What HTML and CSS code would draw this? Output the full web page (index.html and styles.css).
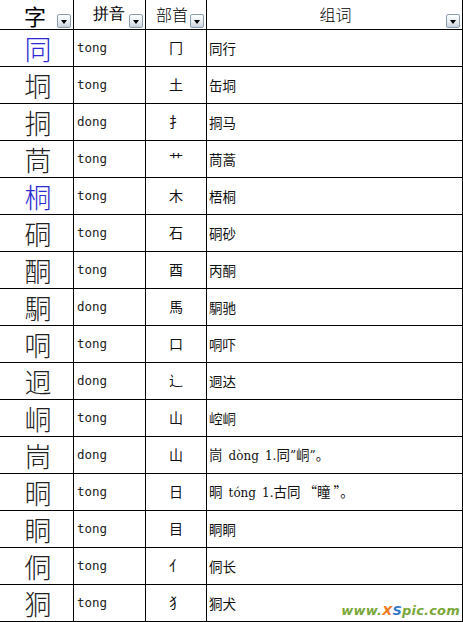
FILE: index.html
```html
<!DOCTYPE html>
<html lang="zh">
<head>
<meta charset="utf-8">
<link rel="stylesheet" href="styles.css">
</head>
<body>
<div class="sheet">
  <div class="row head">
    <div class="cell c1"><span class="h-big">字</span><span class="dd"></span></div>
    <div class="cell c2"><span class="h-txt">拼音</span><span class="dd"></span></div>
    <div class="cell c3"><span class="h-txt">部首</span><span class="dd"></span></div>
    <div class="cell c4"><span class="h-txt">组词</span><span class="dd"></span></div>
  </div>
  <div class="row"><div class="cell c1 blue">同</div><div class="cell c2">tong</div><div class="cell c3">冂</div><div class="cell c4"><span>同行</span></div></div>
  <div class="row"><div class="cell c1">垌</div><div class="cell c2">tong</div><div class="cell c3">土</div><div class="cell c4"><span>缶垌</span></div></div>
  <div class="row"><div class="cell c1">挏</div><div class="cell c2">dong</div><div class="cell c3">扌</div><div class="cell c4"><span>挏马</span></div></div>
  <div class="row"><div class="cell c1">茼</div><div class="cell c2">tong</div><div class="cell c3">艹</div><div class="cell c4"><span>茼蒿</span></div></div>
  <div class="row"><div class="cell c1 blue">桐</div><div class="cell c2">tong</div><div class="cell c3">木</div><div class="cell c4"><span>梧桐</span></div></div>
  <div class="row"><div class="cell c1">硐</div><div class="cell c2">tong</div><div class="cell c3">石</div><div class="cell c4"><span>硐砂</span></div></div>
  <div class="row"><div class="cell c1">酮</div><div class="cell c2">tong</div><div class="cell c3">酉</div><div class="cell c4"><span>丙酮</span></div></div>
  <div class="row"><div class="cell c1">駧</div><div class="cell c2">dong</div><div class="cell c3">馬</div><div class="cell c4"><span>駧驰</span></div></div>
  <div class="row"><div class="cell c1">哃</div><div class="cell c2">tong</div><div class="cell c3">口</div><div class="cell c4"><span>哃吓</span></div></div>
  <div class="row"><div class="cell c1">迵</div><div class="cell c2">dong</div><div class="cell c3">辶</div><div class="cell c4"><span>迵达</span></div></div>
  <div class="row"><div class="cell c1">峒</div><div class="cell c2">tong</div><div class="cell c3">山</div><div class="cell c4"><span>崆峒</span></div></div>
  <div class="row"><div class="cell c1">峝</div><div class="cell c2">dong</div><div class="cell c3">山</div><div class="cell c4"><span>峝&nbsp;&nbsp;<span class="lat">dòng</span>&nbsp;&nbsp;<span class="lat">1.</span>同<span class="lat">”</span>峒<span class="lat">”</span>。</span></div></div>
  <div class="row"><div class="cell c1">晍</div><div class="cell c2">tong</div><div class="cell c3">日</div><div class="cell c4"><span>晍&nbsp;&nbsp;<span class="lat">tóng</span>&nbsp;&nbsp;<span class="lat">1.</span>古同&nbsp;“瞳&nbsp;”。</span></div></div>
  <div class="row"><div class="cell c1">眮</div><div class="cell c2">tong</div><div class="cell c3">目</div><div class="cell c4"><span>眮眮</span></div></div>
  <div class="row"><div class="cell c1">侗</div><div class="cell c2">tong</div><div class="cell c3">亻</div><div class="cell c4"><span>侗长</span></div></div>
  <div class="row"><div class="cell c1">狪</div><div class="cell c2">tong</div><div class="cell c3">犭</div><div class="cell c4"><span>狪犬</span></div></div>
  <div class="mark"><span class="g">www.</span><span class="o">X</span><span class="b">S</span><span class="g">pic.com</span></div>
</div>
</body>
</html>
```
FILE: styles.css
```css
html, body {
  margin: 0;
  padding: 0;
  background: #fff;
}
.sheet {
  position: relative;
  width: 463px;
  height: 622px;
  overflow: hidden;
  font-family: "Noto Sans CJK SC", sans-serif;
  color: #111;
}
.row {
  display: grid;
  grid-template-columns: 74px 72px 61px 256px;
  height: 37px;
}
.row.head {
  height: 30px;
}
.cell {
  box-sizing: border-box;
  border-right: 1px solid #000;
  border-bottom: 1px solid #000;
  display: flex;
  align-items: center;
  overflow: hidden;
  white-space: nowrap;
  line-height: 1.1;
}
.head .cell {
  position: relative;
  justify-content: center;
  overflow: visible;
}
.h-big {
  font-size: 22px;
  font-weight: 400;
  line-height: 1;
  margin-left: -6px;
  margin-top: 1px;
  color: #000;
}
.h-txt {
  font-size: 16px;
  font-weight: 300;
  line-height: 1;
  margin-top: -2px;
  color: #000;
}
.head .c2 .h-txt { margin-left: -4px; }
.head .c3 .h-txt { margin-left: -8px; }
.dd {
  position: absolute;
  right: 2px;
  bottom: 1px;
  width: 14px;
  height: 14px;
  box-sizing: border-box;
  border: 1px solid #8d9db0;
  border-radius: 2px;
  background: linear-gradient(#ffffff, #e6ebf0 60%, #c9d2dc);
}
.dd::after {
  content: "";
  position: absolute;
  left: 3px;
  top: 5px;
  border-left: 3px solid transparent;
  border-right: 3px solid transparent;
  border-top: 4px solid #000;
}
.c1 {
  justify-content: center;
  font-size: 27px;
  font-weight: 300;
  line-height: 1;
  color: #222;
  padding-left: 3px;
}
.c1.blue {
  color: #2a2ad0;
}
.c2 {
  font-family: "DejaVu Sans Mono", monospace;
  font-size: 12.5px;
  padding-left: 3px;
  color: #222;
}
.c3 {
  justify-content: center;
  font-size: 14px;
  color: #111;
}
.c4 {
  font-size: 13.5px;
  padding-left: 2px;
  color: #111;
}
.lat {
  font-family: "DejaVu Serif", serif;
  font-size: 12px;
}
.mark {
  position: absolute;
  right: 3px;
  bottom: 4px;
  font-family: "DejaVu Sans", sans-serif;
  font-style: italic;
  font-weight: bold;
  font-size: 13px;
  letter-spacing: 0.2px;
}
.mark .g { color: #7aa83a; }
.mark .o { color: #ee7a1e; }
.mark .b { color: #3478c8; }
```
